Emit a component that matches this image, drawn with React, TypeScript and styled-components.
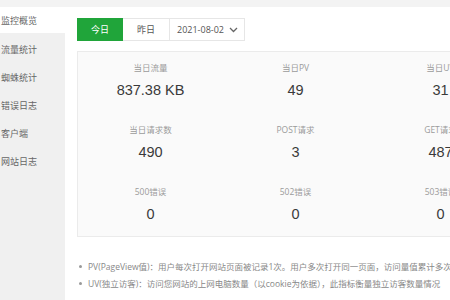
import React from "react";
import styled, { createGlobalStyle } from "styled-components";

const Global = createGlobalStyle`
  html, body { margin: 0; padding: 0; background: #fff; overflow: hidden; }
  body { font-family: "Liberation Sans", "Noto Sans CJK SC", sans-serif; }
`;

const Page = styled.div`
  width: 450px;
  height: 300px;
  overflow: hidden;
  background: #f3f3f3;
  padding-top: 7px;
  box-sizing: border-box;
`;

const Body = styled.div`
  display: flex;
  height: 293px;
`;

const Sidebar = styled.div`
  width: 65px;
  flex-shrink: 0;
  background: #f0f0f0;
  display: flex;
  flex-direction: column;
`;

const NavItem = styled.div<{ $active?: boolean }>`
  height: 28px;
  line-height: 28px;
  padding-left: 1px;
  font-size: 9px;
  color: #666;
  background: ${(p) => (p.$active ? "#fff" : "transparent")};
  font-family: "Noto Sans CJK SC", sans-serif;
  white-space: nowrap;
  &:first-child { height: 26px; line-height: 27px; margin-bottom: 3px; }
`;

const Main = styled.div`
  flex: 1;
  background: #fff;
  padding: 11px 0 0 12px;
  min-width: 0;
`;

const Toolbar = styled.div`
  display: flex;
  height: 23px;
`;

const TabBtn = styled.div<{ $active?: boolean }>`
  width: 46px;
  box-sizing: border-box;
  display: flex;
  align-items: center;
  justify-content: center;
  font-size: 9px;
  font-family: "Noto Sans CJK SC", sans-serif;
  color: ${(p) => (p.$active ? "#fff" : "#555")};
  background: ${(p) => (p.$active ? "#20a53a" : "#fff")};
  border: 1px solid ${(p) => (p.$active ? "#20a53a" : "#e6e6e6")};
  border-left: ${(p) => (p.$active ? "1px solid #20a53a" : "none")};
  & + & { width: 47px; }
`;

const DateSelect = styled.div`
  width: 75px;
  box-sizing: border-box;
  display: flex;
  align-items: center;
  justify-content: space-between;
  padding: 0 6px 0 7px;
  border: 1px solid #e6e6e6;
  border-left: none;
  font-size: 9px;
  color: #555;
  font-family: "Open Sans", "Liberation Sans", sans-serif;
`;

const Card = styled.div`
  margin-top: 10px;
  width: 440px;
  height: 186px;
  box-sizing: border-box;
  background: #fafafa;
  border: 1px solid #ebebeb;
  padding-top: 10px;
  display: grid;
  grid-template-columns: repeat(3, 145px);
  grid-auto-rows: 38px;
  row-gap: 24px;
`;

const Cell = styled.div`
  display: flex;
  flex-direction: column;
  align-items: center;
`;

const Label = styled.div`
  height: 12px;
  line-height: 12px;
  font-size: 8.5px;
  color: #9a9a9a;
  font-family: "Open Sans", "Noto Sans CJK SC", sans-serif;
  white-space: nowrap;
`;

const Value = styled.div`
  margin-top: 7px;
  height: 18px;
  line-height: 18px;
  font-size: 14.5px;
  color: #3a3a3a;
  font-family: "Liberation Sans", "Noto Sans CJK SC", sans-serif;
  white-space: nowrap;
`;

const Notes = styled.ul`
  margin: 21px 0 0;
  padding: 0 0 0 11px;
  list-style: none;
`;

const Note = styled.li`
  position: relative;
  height: 17px;
  line-height: 17px;
  font-size: 8.5px;
  color: #888;
  white-space: nowrap;
  font-family: "Open Sans", "Noto Sans CJK SC", sans-serif;
  &::before {
    content: "";
    position: absolute;
    left: -9px;
    top: 7px;
    width: 3px;
    height: 3px;
    border-radius: 50%;
    background: #999;
  }
`;

const stats = [
  ["当日流量", "837.38 KB"],
  ["当日PV", "49"],
  ["当日UV", "31"],
  ["当日请求数", "490"],
  ["POST请求", "3"],
  ["GET请求", "487"],
  ["500错误", "0"],
  ["502错误", "0"],
  ["503错误", "0"],
];

const nav = ["监控概览", "流量统计", "蜘蛛统计", "错误日志", "客户端", "网站日志"];

export default function App() {
  return (
    <>
      <Global />
      <Page>
        <Body>
          <Sidebar>
            {nav.map((n, i) => (
              <NavItem key={n} $active={i === 0}>
                {n}
              </NavItem>
            ))}
          </Sidebar>
          <Main>
            <Toolbar>
              <TabBtn $active>今日</TabBtn>
              <TabBtn>昨日</TabBtn>
              <DateSelect>
                <span>2021-08-02</span>
                <svg width="9" height="6" viewBox="0 0 9 6">
                  <path d="M1 1l3.5 3.5L8 1" fill="none" stroke="#666" strokeWidth="1.3" />
                </svg>
              </DateSelect>
            </Toolbar>
            <Card>
              {stats.map(([l, v]) => (
                <Cell key={l}>
                  <Label>{l}</Label>
                  <Value>{v}</Value>
                </Cell>
              ))}
            </Card>
            <Notes>
              <Note>PV(PageView值)：用户每次打开网站页面被记录1次。用户多次打开同一页面，访问量值累计多次</Note>
              <Note>UV(独立访客)：访问您网站的上网电脑数量（以cookie为依据），此指标衡量独立访客数量情况</Note>
            </Notes>
          </Main>
        </Body>
      </Page>
    </>
  );
}
